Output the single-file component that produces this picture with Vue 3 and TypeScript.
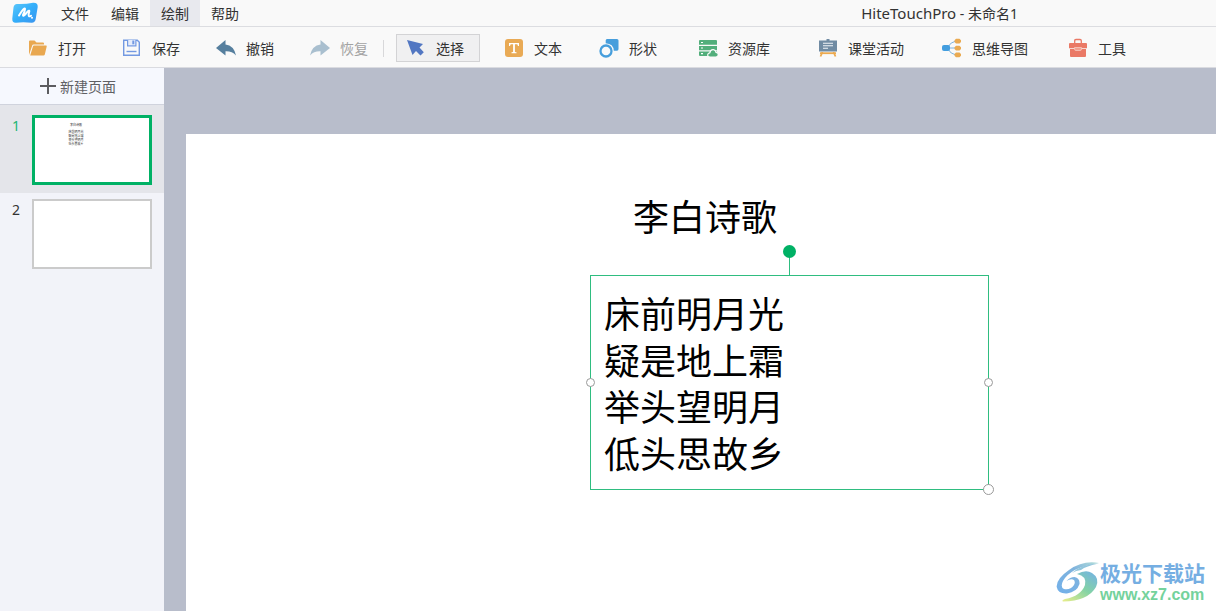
<script setup lang="ts">
import { ref } from 'vue'

interface Tool { id: string; label: string; disabled?: boolean }

const menus: string[] = ['文件', '编辑', '绘制', '帮助']
const activeMenu = ref('绘制')

const tools: Tool[] = [
  { id: 'open', label: '打开' },
  { id: 'save', label: '保存' },
  { id: 'undo', label: '撤销' },
  { id: 'redo', label: '恢复', disabled: true },
  { id: 'select', label: '选择' },
  { id: 'text', label: '文本' },
  { id: 'shape', label: '形状' },
  { id: 'library', label: '资源库' },
  { id: 'class', label: '课堂活动' },
  { id: 'mind', label: '思维导图' },
  { id: 'kit', label: '工具' },
]
const activeTool = ref('select')

const heading = '李白诗歌'
const poem: string[] = ['床前明月光', '疑是地上霜', '举头望明月', '低头思故乡']
const pages: number[] = [1, 2]
const currentPage = ref(1)
</script>

<template>
  <div class="app">
    <header class="titlebar">
      <svg class="logo" viewBox="0 0 26 21" aria-hidden="true">
        <defs>
          <linearGradient id="logoFill" x1="0" y1="0" x2="1" y2="1">
            <stop offset="0" stop-color="#5cc8fa" />
            <stop offset=".5" stop-color="#33aefa" />
            <stop offset="1" stop-color="#3b93ee" />
          </linearGradient>
        </defs>
        <path d="M5 1.500Q14 1.800 21 .3Q26 0 25.700 4.500L23.700 16.500Q23 20.500 19.500 20.300Q11 19.200 4 20.300Q0 20.500.3 16L1.500 5Q2 1.500 5 1.500Z" fill="url(#logoFill)" />
        <path d="M7 13Q12.500 4 13 6.500Q13 8.500 11 12.500Q11 14.500 14 11Q17.300 6.800 17.300 8.800L16.600 12Q16.600 15 19 13.200" fill="none" stroke="#fff" stroke-width="2" stroke-linecap="round" stroke-linejoin="round" />
        <circle cx="20" cy="15.300" r="1" fill="#fff" />
      </svg>
      <nav class="menus">
        <button v-for="m in menus" :key="m" type="button" class="menu" :class="{ on: m === activeMenu }" @click="activeMenu = m">{{ m }}</button>
      </nav>
      <h1 class="doc"><span class="product">HiteTouchPro</span> - 未命名1</h1>
    </header>

    <div class="toolbar" role="toolbar">
      <div v-for="t in tools" :key="t.id" class="slot" :class="{ divided: t.id === 'redo' }">
        <button type="button" class="tool" :class="{ on: t.id === activeTool }" :disabled="t.disabled" @click="activeTool = t.id">
          <svg class="icon" viewBox="0 0 20 20" aria-hidden="true">
            <g v-if="t.id === 'open'" fill="#e9a850">
              <path d="M1 17V3.500Q1 2.500 2 2.500H6.500L8.500 4.500H15Q16 4.500 16 5.500V6.500H5.500Q4.500 6.500 4.200 7.400Z" />
              <path d="M6 7.500H18Q19 7.500 18.700 8.500L16.800 16.500Q16.500 17.500 15.500 17.500H2.200L5 8.300Q5.200 7.500 6 7.500Z" />
            </g>
            <g v-else-if="t.id === 'save'" fill="none" stroke="#7399e2" stroke-width="1.400">
              <path d="M1.700 2.200H15.300L17.300 4.200V17.300H1.700Z" />
              <path d="M5 2V8.500H14.500V2Z" fill="#7399e2" stroke="none" />
              <path d="M6.200 2H13.300V7.300H6.200Z" fill="#e6edfb" stroke="none" />
              <path d="M11.300 2.500V6.300" stroke-width="2" />
              <path d="M4.500 13.500H14.500" />
            </g>
            <path v-else-if="t.id === 'undo'" fill="#567f9e" d="M0 10L9.500 2V6.500Q18 7.500 20 17.500Q16 13 9.500 13.300V17.500Z" />
            <path v-else-if="t.id === 'redo'" fill="#a9bfcf" d="M20 10L10.500 2V6.500Q2 7.500 0 17.500Q4 13 10.500 13.300V17.500Z" />
            <path v-else-if="t.id === 'select'" fill="#5277c2" d="M1 2L17 6L13.500 9.500L17.800 14.300L14.500 17.500L10 13L6.500 17Z" />
            <g v-else-if="t.id === 'text'">
              <rect x="1" y="1" width="18" height="18" rx="3" fill="#e9aa55" />
              <path d="M5 5H15V8H14L13.300 6.300H10.900V14L12.500 14.300V15.200H7.500V14.300L9.100 14V6.300H6.700L6 8H5Z" fill="#fff" />
            </g>
            <g v-else-if="t.id === 'shape'">
              <path d="M8 1H18Q19.500 1 19.500 2.500V11Q19.500 12.700 18 12.700H14.800Q14.500 5.800 6.700 5.300V2.500Q6.700 1 8 1Z" fill="#479edc" />
              <circle cx="7" cy="13" r="5.500" fill="none" stroke="#479edc" stroke-width="2.300" />
            </g>
            <g v-else-if="t.id === 'library'">
              <path d="M2 2H18Q19 2 19 3V6.800H1V3Q1 2 2 2ZM1 8H19V12.200H1ZM1 13.400H19V18H2Q1 18 1 17Z" fill="#52ae7b" />
              <path d="M3 4.500H5M3 10H5M3 15.700H5" stroke="#fff" stroke-width="1.200" />
              <path d="M12 19Q9.500 18.800 9.700 16.700Q10 15 11.800 14.800Q12.500 11.200 15.500 11.700Q17.700 12.200 17.900 14.300Q20.300 14.500 20.300 16.800Q20 19 17.700 19Z" fill="#52ae7b" stroke="#f9f9f9" stroke-width="1.200" />
            </g>
            <g v-else-if="t.id === 'class'">
              <path d="M4.500 14L2.500 18.500M15.500 14L17.500 18.500" stroke="#eba94f" stroke-width="1.800" />
              <path d="M2 15.200H18" stroke="#eba94f" stroke-width="1.800" />
              <path d="M1 2.500H8.500V1H11.500V2.500H19V13.500H1Z" fill="#708ba3" />
              <path d="M5 5.300H15M5 7.800H15M5 10.300H10" stroke="#eef3f7" stroke-width="1.100" />
            </g>
            <g v-else-if="t.id === 'mind'">
              <path d="M14 3Q9 3.500 5 10Q9 16.500 14 17M5 10H14" fill="none" stroke="#7db2dc" stroke-width="1" />
              <rect x="0" y="7" width="8" height="6" rx="2" fill="#439edf" />
              <path d="M14 .8H17.500L19 2.300V4L17.500 5.500H14L12.500 4V2.300ZM14 7.700H17.500L19 9.200V10.900L17.500 12.400H14L12.500 10.900V9.200ZM14 14.500H17.500L19 16V17.700L17.500 19.200H14L12.500 17.700V16Z" fill="#eaaa51" />
            </g>
            <g v-else>
              <path d="M6.700 6V2.800Q6.700 1.500 8 1.500H12Q13.300 1.500 13.300 2.800V6" fill="none" stroke="#ea7966" stroke-width="1.300" />
              <path d="M2 5H18Q19 5 19 6V10.300H1V6Q1 5 2 5ZM2 11H18V18Q18 19 17 19H3Q2 19 2 18Z" fill="#ea7966" />
              <path d="M6.500 9.500H13.500V11Q13.500 12.500 12 12.500H8Q6.500 12.500 6.500 11Z" fill="#f0a090" stroke="#f8c9c0" stroke-width=".8" />
            </g>
          </svg>
          <span>{{ t.label }}</span>
        </button>
      </div>
    </div>

    <main class="body">
      <aside class="side">
        <button type="button" class="new">
          <svg class="plus" viewBox="0 0 16 16" aria-hidden="true"><path d="M0 8H16M8 0V16" stroke="#5c5c60" stroke-width="2" /></svg>
          <span>新建页面</span>
        </button>
        <ol class="pages">
          <li v-for="p in pages" :key="p">
            <button type="button" class="page" :class="{ current: p === currentPage }" @click="currentPage = p">
              <span class="num">{{ p }}</span>
              <span class="thumb">
                <span v-if="p === 1" class="mini">
                  <span class="mini-title">{{ heading }}</span>
                  <span v-for="line in poem" :key="line" class="mini-line">{{ line }}</span>
                </span>
              </span>
            </button>
          </li>
        </ol>
      </aside>

      <section class="work">
        <div class="canvas">
          <h2 class="heading">{{ heading }}</h2>
          <div class="box">
            <p v-for="line in poem" :key="line" class="line">{{ line }}</p>
            <i class="stem"></i>
            <i class="spin"></i>
            <i class="grip west"></i>
            <i class="grip east"></i>
            <i class="grip corner"></i>
          </div>
          <div class="mark">
            <svg class="swirl" viewBox="0 0 44 42" aria-hidden="true">
              <defs>
                <linearGradient id="swirlBlue" x1="1" y1="0" x2="0" y2="1">
                  <stop offset="0" stop-color="#b5dfd8" />
                  <stop offset=".4" stop-color="#7fb3dd" />
                  <stop offset="1" stop-color="#72b0ea" />
                </linearGradient>
                <linearGradient id="swirlGreen" x1=".9" y1="0" x2=".1" y2="1">
                  <stop offset="0" stop-color="#74b4e2" />
                  <stop offset=".5" stop-color="#84d3a5" />
                  <stop offset="1" stop-color="#e2ec8c" />
                </linearGradient>
              </defs>
              <path d="M43 2Q27 -1 13 9Q0 18 .7 26Q2 33 11 32.500Q21 31 23.500 23Q24 17 18.500 16Q14 16 10.500 20Q14 17.500 17 18.500Q20 20 18 24Q14 29.500 8 28Q4 26 7 20Q15 6 43 2Z" fill="url(#swirlBlue)" />
              <path d="M43 2.500Q25 3 16 12Q20 9.500 25 9Q30 5 43 2.500Z" fill="#91c5dc" />
              <path d="M21 13Q30 8 36 12Q44 17 40 26Q32 40 7 40.500Q5 39.500 9 38Q25 35 29 24Q31 15 21 13Z" fill="url(#swirlGreen)" />
            </svg>
            <div class="mark-text">
              <span class="mark-name">极光下载站</span>
              <span class="mark-url">www.xz7.com</span>
            </div>
          </div>
        </div>
      </section>
    </main>
  </div>
</template>

<style>
body { margin: 0; }
</style>

<style scoped>
.app {
  display: flex;
  flex-direction: column;
  height: 100vh;
  overflow: hidden;
  background: #f9f9f9;
  color: #333;
  font: 14px/20px "Noto Sans", "Noto Sans CJK SC", sans-serif;
}
.app * { box-sizing: border-box; }
button {
  margin: 0;
  padding: 0;
  border: 0;
  background: none;
  color: inherit;
  font: inherit;
}
.titlebar {
  display: flex;
  flex: none;
  align-items: center;
  height: 27px;
  border-bottom: 1px solid #dcdde1;
}
.logo { width: 26px; height: 22px; margin: 0 12px; }
.menus { display: flex; height: 100%; }
.menu { width: 50px; padding-top: 2px; }
.menu.on { background: #e8e9ee; }
.doc {
  margin: 0 198px 0 auto;
  font-size: 14px;
  font-weight: 400;
}
.product { font-size: 15px; }
.toolbar {
  display: grid;
  flex: none;
  grid-template-columns: repeat(3, 94px) 96px 98px 95px 99px 120px 124px 126px auto;
  align-items: center;
  justify-content: start;
  height: 41px;
  padding: 2px 0 0 18px;
  border-bottom: 1px solid #dadbe0;
}
.slot { display: flex; }
.slot.divided {
  background: linear-gradient(#d8d8da, #d8d8da) no-repeat 83px center / 1px 17px;
}
.tool {
  display: flex;
  align-items: center;
  gap: 10px;
  height: 28px;
  padding: 0 15px 0 9px;
  border: 1px solid transparent;
  white-space: nowrap;
}
.tool span { padding-top: 2px; }
.tool.on { border-color: #d3d3d5; background: #f0f0f1; }
.tool:disabled { color: #a3a3a3; }
.icon { flex: none; width: 20px; height: 20px; }
.body { display: flex; flex: 1; min-height: 0; }
.side { flex: none; width: 164px; background: #f2f3f9; }
.new {
  display: flex;
  align-items: center;
  gap: 4px;
  width: 100%;
  height: 37px;
  padding-left: 40px;
  border-bottom: 1px solid #d0d3dd;
  background: #f6f8fe;
  color: #606064;
}
.new span { padding-top: 2px; }
.plus { width: 16px; height: 16px; }
.pages { margin: 0; padding: 0; list-style: none; }
.page {
  display: flex;
  width: 100%;
  padding: 6px 12px 8px 0;
  text-align: center;
}
.page.current { padding-top: 10px; background: #e4e5ea; }
.num { width: 32px; line-height: 22px; }
.current .num { color: #22b573; }
.thumb {
  flex: 1;
  height: 70px;
  border: 2px solid #cbcbcb;
  background: #fff;
}
.current .thumb { border: 3px solid #00b165; }
.mini {
  display: flex;
  flex-direction: column;
  width: 16px;
  margin: 5px 0 0 33px;
  color: #333;
  font-size: 3px;
  line-height: 4px;
  white-space: nowrap;
}
.mini-title { margin-bottom: 3px; }
.work {
  flex: 1;
  display: flex;
  min-width: 0;
  padding: 66px 0 0 22px;
  background: #b8bdcb;
}
.canvas {
  position: relative;
  flex: 1;
  background: #fff;
  color: #000;
}
.heading {
  position: absolute;
  left: 447px;
  top: 61px;
  margin: 0;
  font-size: 36px;
  font-weight: 400;
  line-height: 46px;
}
.box {
  position: absolute;
  left: 404px;
  top: 141px;
  width: 399px;
  padding: 16px 13px 11px;
  border: 1px solid #2fbd80;
}
.line { margin: 0; font-size: 36px; line-height: 46px; }
.line:nth-child(even) { padding-top: 1px; }
.stem {
  position: absolute;
  left: 198px;
  top: -20px;
  width: 1px;
  height: 20px;
  background: #2fbd80;
}
.spin {
  position: absolute;
  left: 192px;
  top: -31px;
  width: 13px;
  height: 13px;
  border-radius: 50%;
  background: #00b165;
}
.grip {
  position: absolute;
  width: 9px;
  height: 9px;
  border: 1px solid #999;
  border-radius: 50%;
  background: #fff;
}
.west { left: -5px; top: 102px; }
.east { right: -5px; top: 102px; }
.corner { right: -6px; bottom: -6px; width: 11px; height: 11px; }
.mark {
  position: absolute;
  right: 11px;
  bottom: 6px;
  display: flex;
  align-items: center;
}
.swirl { width: 44px; height: 42px; }
.mark-text { display: flex; flex-direction: column; }
.mark-name {
  color: #75aee2;
  font: 700 21px/26px "Noto Sans CJK SC", sans-serif;
}
.mark-url {
  color: #74d29c;
  font: 700 16px/20px "Liberation Sans", sans-serif;
}
</style>
